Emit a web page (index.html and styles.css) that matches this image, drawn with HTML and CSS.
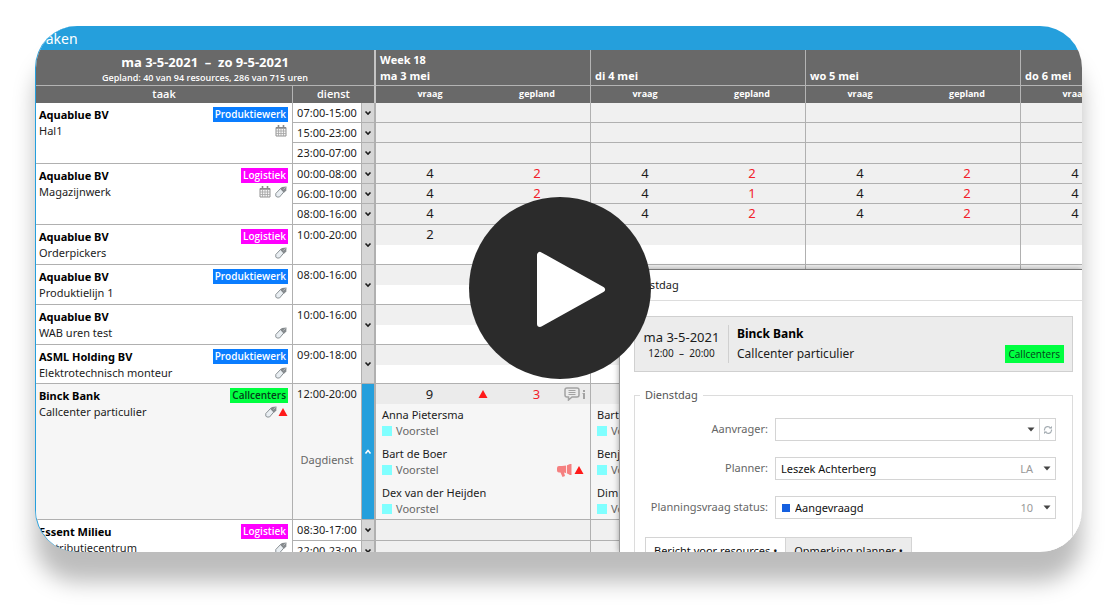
FILE: index.html
```html
<!DOCTYPE html>
<html lang="nl">
<head>
<meta charset="utf-8">
<meta name="viewport" content="width=device-width, initial-scale=1">
<title>Taken</title>
<link rel="stylesheet" href="styles.css">
</head>
<body>
<svg class="defs" aria-hidden="true">
  <symbol id="down" viewBox="0 0 8 6"><path d="M1.500 1.500 4 4l2.500-2.500" fill="none" stroke="currentColor" stroke-width="1.600"/></symbol>
  <symbol id="up" viewBox="0 0 8 6"><path d="M1.500 4.500 4 1.500l2.500 3" fill="none" stroke="currentColor" stroke-width="1.500"/></symbol>
  <symbol id="calendar" viewBox="0 0 12 12"><path d="M1 2.500h10v8.500H1z" fill="#f4f4f4" stroke="#929292"/><path d="M1 3h10M3.500 0v3M8.500 0v3" stroke="#8a8a8a" stroke-width="1.600"/><path d="M1 6h10M1 8.500h10M3.500 4v7M6 4v7M8.500 4v7" stroke="#a5a5a5" stroke-width=".8"/></symbol>
  <symbol id="tag" viewBox="0 0 12 12"><path d="M.8 7.500 5.500 2.500 8.800 6 4.500 11H1.800L.8 10z" fill="#e9eef2" stroke="#8b9296"/><path d="M5 2.500 7 1l4.500-.5L11.300 4.500 9 6.800z" fill="#858a8d"/><path d="M8.500 3.500 10.500 1.300" stroke="#d5d8da" stroke-width=".7"/></symbol>
  <symbol id="alert" viewBox="0 0 10 8"><path d="M5 0l4.500 8h-9z" fill="#ff1a1a"/></symbol>
  <symbol id="arrow" viewBox="0 0 8 5"><path d="M.5.5h7L4 4.500z" fill="#444"/></symbol>
</svg>
<main class="stage">
  <section class="card">
    <h1 class="titlebar">Taken</h1>
    <table class="plan">
      <colgroup><col class="c-task"><col class="c-shift"><col class="c-toggle"><col class="c-ask"><col class="c-set"><col class="c-ask"><col class="c-set"><col class="c-ask"><col class="c-set"><col class="c-ask"><col class="c-set"></colgroup>
      <thead>
        <tr class="head">
          <th colspan="3" class="edge period"><div class="range">ma 3-5-2021 &nbsp;–&nbsp; zo 9-5-2021</div><div class="summary">Gepland: 40 van 94 resources, 286 van 715 uren</div></th>
          <th colspan="2" class="day">Week 18<br>ma 3 mei</th>
          <th colspan="2" class="day">di 4 mei</th>
          <th colspan="2" class="day">wo 5 mei</th>
          <th colspan="2" class="day">do 6 mei</th>
        </tr>
        <tr class="subhead">
          <th class="line">taak</th><th colspan="2" class="edge shift-head">dienst</th>
          <th class="small">vraag</th><th class="small line">gepland</th><th class="small">vraag</th><th class="small line">gepland</th><th class="small">vraag</th><th class="small line">gepland</th><th class="small">vraag</th><th class="small line"></th>
        </tr>
      </thead>
      <tbody>
        <tr class="slot">
          <td rowspan="3" class="task-cell"><div class="task"><div><b>Aquablue BV</b><br>Hal1</div><div class="meta"><span class="tag blue">Produktiewerk</span><span class="icons"><svg class="ic"><use href="#calendar"/></svg></span></div></div></td>
          <td class="shift">07:00-15:00</td><td class="toggle"><button aria-label="Uitklappen"><svg><use href="#down"/></svg></button></td>
          <td class="num"></td><td class="num set"></td><td class="num"></td><td class="num set"></td><td class="num"></td><td class="num set"></td><td class="num"></td><td class="num set"></td>
        </tr>
        <tr class="slot"><td class="shift">15:00-23:00</td><td class="toggle"><button aria-label="Uitklappen"><svg><use href="#down"/></svg></button></td>
          <td class="num"></td><td class="num set"></td><td class="num"></td><td class="num set"></td><td class="num"></td><td class="num set"></td><td class="num"></td><td class="num set"></td></tr>
        <tr class="slot last"><td class="shift">23:00-07:00</td><td class="toggle"><button aria-label="Uitklappen"><svg><use href="#down"/></svg></button></td>
          <td class="num"></td><td class="num set"></td><td class="num"></td><td class="num set"></td><td class="num"></td><td class="num set"></td><td class="num"></td><td class="num set"></td></tr>
        <tr class="slot">
          <td rowspan="3" class="task-cell"><div class="task"><div><b>Aquablue BV</b><br>Magazijnwerk</div><div class="meta"><span class="tag pink">Logistiek</span><span class="icons"><svg class="ic"><use href="#calendar"/></svg><svg class="ic"><use href="#tag"/></svg></span></div></div></td>
          <td class="shift">00:00-08:00</td><td class="toggle"><button aria-label="Uitklappen"><svg><use href="#down"/></svg></button></td>
          <td class="num">4</td><td class="num set">2</td><td class="num">4</td><td class="num set">2</td><td class="num">4</td><td class="num set">2</td><td class="num">4</td><td class="num set"></td>
        </tr>
        <tr class="slot"><td class="shift">06:00-10:00</td><td class="toggle"><button aria-label="Uitklappen"><svg><use href="#down"/></svg></button></td>
          <td class="num">4</td><td class="num set">2</td><td class="num">4</td><td class="num set">1</td><td class="num">4</td><td class="num set">2</td><td class="num">4</td><td class="num set"></td></tr>
        <tr class="slot last"><td class="shift">08:00-16:00</td><td class="toggle"><button aria-label="Uitklappen"><svg><use href="#down"/></svg></button></td>
          <td class="num">4</td><td class="num set">2</td><td class="num">4</td><td class="num set">2</td><td class="num">4</td><td class="num set">2</td><td class="num">4</td><td class="num set"></td></tr>
        <tr class="single">
          <td class="task-cell"><div class="task"><div><b>Aquablue BV</b><br>Orderpickers</div><div class="meta"><span class="tag pink">Logistiek</span><span class="icons"><svg class="ic"><use href="#tag"/></svg></span></div></div></td>
          <td class="shift">10:00-20:00</td><td class="toggle"><button aria-label="Uitklappen"><svg><use href="#down"/></svg></button></td>
          <td class="num">2</td><td class="num set"></td><td class="num"></td><td class="num set"></td><td class="num"></td><td class="num set"></td><td class="num"></td><td class="num set"></td>
        </tr>
        <tr class="single">
          <td class="task-cell"><div class="task"><div><b>Aquablue BV</b><br>Produktielijn 1</div><div class="meta"><span class="tag blue">Produktiewerk</span><span class="icons"><svg class="ic"><use href="#tag"/></svg></span></div></div></td>
          <td class="shift">08:00-16:00</td><td class="toggle"><button aria-label="Uitklappen"><svg><use href="#down"/></svg></button></td>
          <td class="num"></td><td class="num set"></td><td class="num"></td><td class="num set"></td><td class="num"></td><td class="num set"></td><td class="num"></td><td class="num set"></td>
        </tr>
        <tr class="single">
          <td class="task-cell"><div class="task"><div><b>Aquablue BV</b><br>WAB uren test</div><div class="meta"><span class="icons"><svg class="ic"><use href="#tag"/></svg></span></div></div></td>
          <td class="shift">10:00-16:00</td><td class="toggle"><button aria-label="Uitklappen"><svg><use href="#down"/></svg></button></td>
          <td class="num"></td><td class="num set"></td><td class="num"></td><td class="num set"></td><td class="num"></td><td class="num set"></td><td class="num"></td><td class="num set"></td>
        </tr>
        <tr class="single last">
          <td class="task-cell"><div class="task"><div><b>ASML Holding BV</b><br>Elektrotechnisch monteur</div><div class="meta"><span class="tag blue">Produktiewerk</span><span class="icons"><svg class="ic"><use href="#tag"/></svg></span></div></div></td>
          <td class="shift">09:00-18:00</td><td class="toggle"><button aria-label="Uitklappen"><svg><use href="#down"/></svg></button></td>
          <td class="num"></td><td class="num set"></td><td class="num"></td><td class="num set"></td><td class="num"></td><td class="num set"></td><td class="num"></td><td class="num set"></td>
        </tr>
        <tr class="open">
          <td class="task-cell"><div class="task"><div><b>Binck Bank</b><br>Callcenter particulier</div><div class="meta"><span class="tag green">Callcenters</span><span class="icons tight"><svg class="ic"><use href="#tag"/></svg><svg class="alert"><use href="#alert"/></svg></span></div></div></td>
          <td class="shift">12:00-20:00<div class="shift-name">Dagdienst</div></td><td class="toggle"><button aria-label="Inklappen"><svg><use href="#up"/></svg></button></td>
          <td colspan="2" class="detail">
            <div class="counts"><span class="ask">9</span><svg class="alert warn"><use href="#alert"/></svg><span class="got">3</span>
              <span class="notes"><svg class="note" viewBox="0 0 16 14"><path d="M3 1h10q2 0 2 2v5q0 2-2 2H8l-3.500 3V10H3Q1 10 1 8V3q0-2 2-2z" fill="none" stroke="#a3a3a3" stroke-width="1.500"/><path d="M4.500 3.500h7M4.500 5.500h7M4.500 7.500h7" stroke="#a3a3a3"/></svg><svg class="info" viewBox="0 0 4 10"><path d="M1 1h2v2H1zM.5 4H3v6H1V5H.5z" fill="#a3a3a3"/></svg></span></div>
            <ul class="people">
              <li>Anna Pietersma<div class="state"><i></i>Voorstel</div></li>
              <li>Bart de Boer<div class="state"><i></i>Voorstel<span class="flags"><svg class="horn" viewBox="0 0 15 13"><path d="M0 4q0-2 2-2h3q5 0 8-2h1.500v11H13q-2.500-2-6-2.500l1 3.500-2.500 1-2-4.500H2Q0 8.500 0 6.500z" fill="#f58080"/><path d="M9.500 1v8.500" stroke="#fff" stroke-width=".8"/></svg><svg class="alert"><use href="#alert"/></svg></span></div></li>
              <li>Dex van der Heijden<div class="state"><i></i>Voorstel</div></li>
            </ul>
          </td>
          <td colspan="2" class="detail">
            <div class="counts"></div>
            <ul class="people"><li>Bart<div class="state"><i></i>Voorstel</div></li><li>Benj<div class="state"><i></i>Voorstel</div></li><li>Dim<div class="state"><i></i>Voorstel</div></li></ul>
          </td>
          <td colspan="2" class="detail"><div class="counts"></div></td>
          <td colspan="2" class="detail"><div class="counts"></div></td>
        </tr>
        <tr class="slot last">
          <td rowspan="2" class="task-cell"><div class="task"><div><b>Essent Milieu</b><br>Distributiecentrum</div><div class="meta"><span class="tag pink">Logistiek</span><span class="icons"><svg class="ic"><use href="#tag"/></svg></span></div></div></td>
          <td class="shift">08:30-17:00</td><td class="toggle"><button aria-label="Uitklappen"><svg><use href="#down"/></svg></button></td>
          <td class="num"></td><td class="num set"></td><td class="num"></td><td class="num set"></td><td class="num"></td><td class="num set"></td><td class="num"></td><td class="num set"></td>
        </tr>
        <tr class="slot"><td class="shift">22:00-23:00</td><td class="toggle"><button aria-label="Uitklappen"><svg><use href="#down"/></svg></button></td>
          <td class="num"></td><td class="num set"></td><td class="num"></td><td class="num set"></td><td class="num"></td><td class="num set"></td><td class="num"></td><td class="num set"></td></tr>
      </tbody>
    </table>

    <section class="dialog" aria-label="Dienstdag">
      <h2 class="dialog-title">Dienstdag</h2>
      <form class="dialog-body">
        <header class="banner">
          <div class="when"><div class="date">ma 3-5-2021</div><div class="time">12:00 &nbsp;–&nbsp; 20:00</div></div>
          <div class="client"><b>Binck Bank</b><div>Callcenter particulier</div></div>
          <span class="tag green big">Callcenters</span>
        </header>
        <fieldset class="group">
          <legend>Dienstdag</legend>
          <div class="row"><label for="aanvrager">Aanvrager:</label>
            <div class="field"><select id="aanvrager"><option></option></select><svg class="arrow"><use href="#arrow"/></svg><button type="button" class="reload" aria-label="Vernieuwen"><svg viewBox="0 0 10 10"><path d="M1.500 5.500V4.500a3.200 3.200 0 0 1 6-1.200M8.500 4.500v1a3.200 3.200 0 0 1-6 1.200" fill="none" stroke="#a5adb3" stroke-width="1.200"/><path d="M6 3.500h3V1zM4 6.500H1V9z" fill="#a5adb3"/></svg></button></div></div>
          <div class="row"><label for="planner">Planner:</label>
            <div class="field"><select id="planner"><option>Leszek Achterberg</option></select><span class="code">LA</span><svg class="arrow"><use href="#arrow"/></svg></div></div>
          <div class="row"><label for="status">Planningsvraag status:</label>
            <div class="field"><i class="swatch"></i><select id="status"><option>Aangevraagd</option></select><span class="code">10</span><svg class="arrow"><use href="#arrow"/></svg></div></div>
          <div class="tabs"><button type="button" class="tab active">Bericht voor resources •</button><button type="button" class="tab">Opmerking planner •</button></div>
        </fieldset>
      </form>
    </section>
  </section>
  <button class="play" aria-label="Afspelen"><svg viewBox="0 0 182 182"><path d="M71 58v69l62-34.500z" fill="#fff" stroke="#fff" stroke-width="6" stroke-linejoin="round"/></svg></button>
</main>
</body>
</html>
```

FILE: styles.css
```css
* { box-sizing: border-box; }
body {
  margin: 0;
  background: #fff;
  color: #1c1c1c;
  font: 11px/16px "Noto Sans", "Open Sans", sans-serif;
}
button, select { font: inherit; color: inherit; border: 0; background: none; padding: 0; margin: 0; border-radius: 0; }
ul { list-style: none; margin: 0; padding: 0; }
svg { display: block; }
b { color: #000; }
.defs { position: absolute; width: 0; height: 0; }

.stage { position: relative; height: 100vh; padding: 26px 38px 57px 35px; }
.card {
  position: relative;
  height: 100%;
  overflow: hidden;
  border-radius: 42px;
  border-left: 1px solid #259fdc;
  background: #fff;
  box-shadow: 0 30px 22px #bdbdbd;
}
.titlebar {
  margin: 0;
  height: 24px;
  padding: 2px 0 0 3px;
  background: #259fdc;
  color: #fff;
  font-size: 14px;
  line-height: 22px;
  font-weight: 400;
}

/* schedule */
.plan { width: 1200px; table-layout: fixed; border-collapse: separate; border-spacing: 0; }
.c-task { width: 257px; }
.c-shift { width: 69px; }
.c-toggle { width: 14px; }
.c-ask { width: 108px; }
.c-set { width: 107px; }
th, td { padding: 0; vertical-align: top; }
th { background: #696969; color: #fff; font-weight: 600; font-family: "Open Sans", "Noto Sans", sans-serif; }
.head th { height: 36px; border-bottom: 1px solid #b4b4b4; }
.subhead th { height: 17px; line-height: 15px; }
.day { text-align: left; vertical-align: bottom; padding: 0 0 1px 4px; border-right: 1px solid #b4b4b4; font-weight: 700; }
.line { border-right: 1px solid #b4b4b4; }
.edge { border-right: 2px solid #c4c4c4; }
.range { font-size: 13px; line-height: 18px; padding-top: 3px; font-weight: 700; }
.summary { font-size: 9px; line-height: 14px; }
.small { font-size: 9px; font-weight: 700; }

td { border-bottom: 1px solid #b0b0b0; }
.slot td { height: 20px; }
.slot.last td { height: 21px; }
.slot .task-cell { height: 61px; }
.slot.last .task-cell { height: 41px; }
.single td { height: 40px; }
.single.last td { height: 39px; }
.open td { height: 136px; background: #f6f6f6; }
.task-cell { border-right: 1px solid #b0b0b0; }
.task { display: flex; justify-content: space-between; padding: 4px 4px 0 3px; white-space: nowrap; }
.meta { display: flex; flex-direction: column; align-items: flex-end; justify-content: flex-end; }
.tag {
  height: 15px;
  margin-bottom: 1px;
  padding: 0 2px;
  font: 600 10px/15px "Open Sans", "Noto Sans", sans-serif;
  color: #fff;
}
.blue { background: #0a7dff; }
.pink { background: #ff00ff; }
.green { background: #00ff40; color: #04401a; }
.icons { display: flex; align-items: center; gap: 4px; height: 16px; padding-right: 1px; }
.tight { gap: 1px; padding: 0; }
.ic { width: 12px; height: 12px; }
.alert { width: 10px; height: 8px; }
.shift { padding-top: 2px; text-align: center; white-space: nowrap; border-right: 1px solid #b0b0b0; }
.shift-name { padding-top: 50px; color: #666; }
.toggle { border-right: 2px solid #b0b0b0; background: #d6d6d6; vertical-align: middle; }
.toggle button { display: grid; place-items: center; width: 100%; }
.toggle svg { width: 8px; height: 6px; }
.open .toggle { background: #259fdc; color: #fff; }
.num { text-align: center; font-size: 13px; line-height: 19px; background: #f0f0f0; }
.set { color: #f2222a; border-right: 1px solid #b0b0b0; }
.single .num { background: linear-gradient(#f0f0f0 20px, #fff 20px); }
.detail { border-right: 1px solid #b0b0b0; }
.counts {
  display: grid;
  grid-template-columns: repeat(4, 1fr);
  grid-template-rows: 20px;
  align-items: center;
  justify-items: center;
  height: 20px;
  background: #ebebeb;
  font-size: 13px;
}
.ask { grid-area: 1 / 1 / 2 / 3; }
.warn { grid-area: 1 / 2 / 2 / 4; }
.got { grid-area: 1 / 3 / 2 / 5; color: #f2222a; }
.notes { grid-area: 1 / 4 / 2 / 5; justify-self: end; display: flex; align-items: center; gap: 2px; padding-right: 4px; }
.note { width: 16px; height: 14px; }
.info { width: 4px; height: 10px; }
.people { padding: 0 6px; }
.people li { height: 39px; padding-top: 3px; white-space: nowrap; }
.people li:last-child { height: 36px; }
.state { display: flex; align-items: center; gap: 4px; color: #666; }
.state i { width: 10px; height: 10px; background: #80ffff; }
.flags { display: flex; align-items: center; gap: 2px; margin-left: auto; }
.horn { width: 15px; height: 13px; }

/* dialog */
.dialog {
  position: absolute;
  inset: 243px 0 0 583px;
  overflow: hidden;
  background: #fff;
  border-top: 1px solid #777;
  border-left: 1px solid #999;
  box-shadow: 0 0 6px rgba(0, 0, 0, .35);
}
.dialog-title { margin: 0; height: 31px; padding-left: 6px; font-size: 11px; line-height: 30px; font-weight: 400; border-bottom: 1px solid #ddd; }
.dialog-body { padding: 15px 9px 0 14px; }
.banner { display: flex; align-items: center; height: 56px; padding-right: 8px; background: #ececec; border: 1px solid #d0d0d0; font-size: 12px; }
.when { width: 94px; height: 38px; padding-top: 4px; text-align: center; border-right: 1px solid #d0d0d0; }
.date { font-size: 13px; line-height: 17px; }
.time { font-size: 10px; line-height: 14px; }
.client { flex: 1; padding-left: 8px; line-height: 20px; }
.big { align-self: flex-end; height: 18px; margin-bottom: 8px; padding: 0 4px; font-weight: 400; line-height: 18px; }
.group { margin: 15px 0 0; padding: 15px 16px 0 10px; border: 1px solid #dcdcdc; border-radius: 0; }
.group legend { margin-left: -5px; padding: 0 5px; color: #555; }
.row { display: grid; grid-template-columns: 123px minmax(0, 1fr); column-gap: 7px; margin-bottom: 16px; }
.row label { text-align: right; color: #666; line-height: 21px; white-space: nowrap; }
.field { display: flex; align-items: center; height: 23px; border: 1px solid #d4d4d4; background: #fff; }
.field select { appearance: none; flex: 1; min-width: 0; height: 21px; padding-left: 5px; color: #111; }
.swatch { width: 8px; height: 8px; margin-left: 6px; background: #1560e0; }
.code { color: #999; padding-right: 10px; }
.arrow { width: 8px; height: 5px; margin-right: 4px; }
.reload { display: grid; place-items: center; width: 16px; height: 21px; border-left: 1px solid #d4d4d4; }
.reload svg { width: 10px; height: 10px; }
.tabs { display: flex; margin-top: 18px; }
.tab { height: 27px; padding: 0 8px; border: 1px solid #d4d4d4; background: #ececec; white-space: nowrap; color: #111; }
.tab + .tab { border-left: 0; }
.tab.active { background: #fff; border-bottom-color: #fff; }

.play {
  position: absolute;
  inset: 0 0 33px;
  margin: auto;
  width: 182px;
  height: 182px;
  border-radius: 50%;
  background: #2b2b2b;
}
```
